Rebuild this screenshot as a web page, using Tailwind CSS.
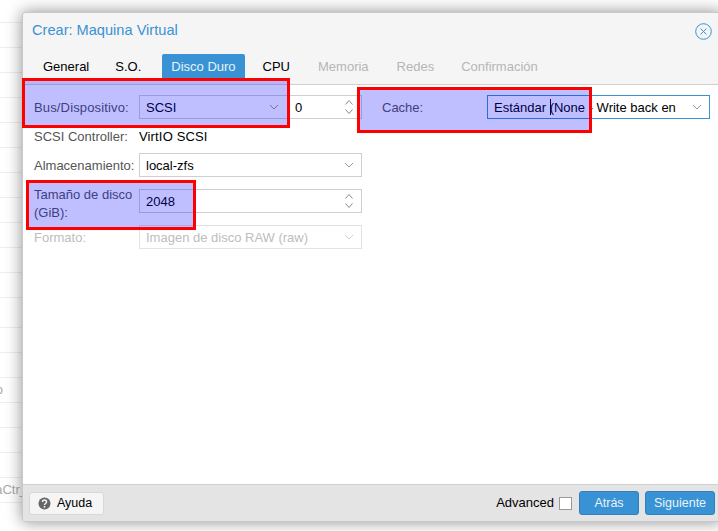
<!DOCTYPE html>
<html lang="en">
<head>
  <meta charset="UTF-8" />
  <title>Crear: Maquina Virtual</title>
  <script src="https://cdn.jsdelivr.net/npm/@tailwindcss/browser@4"></script>
</head>
<body class="relative w-[718px] h-[531px] overflow-hidden bg-white font-['Liberation_Sans',sans-serif] text-[13px] text-black">

  <!-- grid behind the window -->
  <div class="text-[13px] text-[#aaa]">
    <div class="h-[23px] border-b border-[#eee]"></div>
    <div class="h-[25px] border-b border-[#eee]"></div>
    <div class="h-[25px] border-b border-[#eee]"></div>
    <div class="h-[25px] border-b border-[#eee]"></div>
    <div class="h-[25px] border-b border-[#eee]"></div>
    <div class="h-[25px] border-b border-[#eee]"></div>
    <div class="h-[25px] border-b border-[#eee]"></div>
    <div class="h-[25px] border-b border-[#eee]"></div>
    <div class="h-[25px] border-b border-[#eee]"></div>
    <div class="h-[25px] border-b border-[#eee]"></div>
    <div class="h-[25px] border-b border-[#eee]"></div>
    <div class="h-[25px] border-b border-[#eee]"></div>
    <div class="h-[30px] border-b border-[#eee]"></div>
    <div class="h-[25px] border-b border-[#eee]"></div>
    <div class="h-[25px] border-b border-[#eee]"></div>
    <div class="h-[25px] border-b border-[#eee] flex items-center justify-end w-[22px]"><span class="mr-[19px]">o</span></div>
    <div class="h-[25px] border-b border-[#eee]"></div>
    <div class="h-[25px] border-b border-[#eee]"></div>
    <div class="h-[25px] border-b border-[#eee]"></div>
    <div class="h-[25px] border-b border-[#eee] flex items-center justify-end w-[27px] whitespace-nowrap"><span>aCtr_</span></div>
  </div>

  <!-- window, runs past the right edge of the shot -->
  <div class="absolute left-[22px] top-[12px] w-[700px] h-[510px] flex flex-col bg-[#f5f5f5] border border-[#c8c8c8] rounded-[3px] shadow-[0_0_16px_rgba(0,0,0,0.45)]">
    <div class="h-[36px] flex items-center justify-between pl-[9px] pr-[9px] shrink-0">
      <span class="text-[14.6px] text-[#3892d4]">Crear: Maquina Virtual</span>
      <svg width="17" height="17" viewBox="0 0 17 17" fill="none" stroke="#3892d4"><circle cx="8.500" cy="8.500" r="7.800"/><path d="M5.500 5.500l6 6M11.500 5.500l-6 6"/></svg>
    </div>

    <div class="h-[36px] flex items-start gap-[10px] pt-[5px] pl-[11px] border-b border-[#cfcfcf] shrink-0">
      <span class="h-[24px] pt-[2px] px-[9px] flex items-center">General</span>
      <span class="h-[24px] pt-[2px] px-[9px] -ml-[2px] flex items-center">S.O.</span>
      <span class="h-[24px] pt-[2px] px-[9px] ml-[2px] flex items-center rounded-t-[2px] bg-[#3892d4] text-[#e8f3fb]">Disco Duro</span>
      <span class="h-[24px] pt-[2px] px-[9px] -ml-[1px] flex items-center">CPU</span>
      <span class="h-[24px] pt-[2px] px-[9px] flex items-center text-[#b5b5b5]">Memoria</span>
      <span class="h-[24px] pt-[2px] px-[9px] flex items-center text-[#b5b5b5]">Redes</span>
      <span class="h-[24px] pt-[2px] px-[9px] -ml-[1px] flex items-center text-[#b5b5b5]">Confirmación</span>
    </div>

    <div class="flex-1 bg-white pt-[10px] pl-[11px]">
      <div class="flex">
        <div class="w-[328px] flex flex-col">
          <div class="h-[24px] flex items-center">
            <span class="w-[105px] pt-[2px] text-[#555] tracking-[0.15px]">Bus/Dispositivo:</span>
            <div class="w-[149px] h-full flex items-center justify-between pl-[6px] pr-[8px] border border-[#cfcfcf]">
              <span class="pt-[2px]">SCSI</span>
              <svg width="10" height="6" viewBox="0 0 10 6" fill="none" stroke="#999"><path d="M1 1l4 4 4-4"/></svg>
            </div>
            <div class="flex-1 h-full flex items-center justify-between pl-[7px] pr-[8px] border border-l-0 border-[#cfcfcf]">
              <span class="pt-[2px]">0</span>
              <svg width="8" height="16" viewBox="0 0 8 16" fill="none" stroke="#888"><path d="M.5 5.500l3.500-4 3.500 4M.5 10.500l3.500 4 3.500-4"/></svg>
            </div>
          </div>
          <div class="h-[34px] flex items-center">
            <span class="w-[105px] pt-[2px] text-[#555]">SCSI Controller:</span>
            <span class="pt-[2px] tracking-[0.15px]">VirtIO SCSI</span>
          </div>
          <div class="h-[24px] flex items-center">
            <span class="w-[105px] pt-[2px] text-[#555]">Almacenamiento:</span>
            <div class="flex-1 h-full flex items-center justify-between pl-[6px] pr-[7px] border border-[#cfcfcf]">
              <span class="pt-[2px]">local-zfs</span>
              <svg width="10" height="6" viewBox="0 0 10 6" fill="none" stroke="#999"><path d="M1 1l4 4 4-4"/></svg>
            </div>
          </div>
          <div class="mt-[12px] h-[24px] flex items-center">
            <span class="w-[105px] pt-[6px] leading-[18px] text-[#555]">Tamaño de disco (GiB):</span>
            <div class="flex-1 h-[24px] flex items-center justify-between pl-[6px] pr-[8px] border border-[#cfcfcf]">
              <span class="pt-[2px]">2048</span>
              <svg width="8" height="16" viewBox="0 0 8 16" fill="none" stroke="#888"><path d="M.5 5.500l3.500-4 3.500 4M.5 10.500l3.500 4 3.500-4"/></svg>
            </div>
          </div>
          <div class="mt-[12px] h-[24px] flex items-center text-[#bdbdbd]">
            <span class="w-[105px] pt-[2px]">Formato:</span>
            <div class="flex-1 h-full flex items-center justify-between pl-[6px] pr-[7px] border border-[#e3e3e3]">
              <span class="pt-[2px]">Imagen de disco RAW (raw)</span>
              <svg width="10" height="6" viewBox="0 0 10 6" fill="none" stroke="#ccc"><path d="M1 1l4 4 4-4"/></svg>
            </div>
          </div>
        </div>
        <div class="ml-[20px] w-[328px] h-[24px] flex items-center">
          <span class="w-[105px] pt-[2px] text-[#555]">Cache:</span>
          <div class="flex-1 h-full flex items-center justify-between pl-[6px] pr-[7px] border border-[#3892d4]">
            <span class="pt-[2px] whitespace-pre">Estándar <span class="relative"><span class="absolute left-[0px] top-[-1px] w-px h-[16px] bg-black"></span></span>(None - Write back en</span>
            <svg width="10" height="6" viewBox="0 0 10 6" fill="none" stroke="#999"><path d="M1 1l4 4 4-4"/></svg>
          </div>
        </div>
      </div>
    </div>

    <div class="h-[37px] flex items-center justify-between px-[6px] bg-[#e4e4e4] border-t border-[#cfcfcf] shrink-0">
      <div class="h-[23px] w-[75px] flex items-center gap-[6px] pl-[8px] bg-[#f5f5f5] border border-[#d8d8d8] rounded-[3px] text-[12.500px]">
        <svg width="13" height="13" viewBox="0 0 13 13"><circle cx="6.500" cy="6.500" r="6" fill="#666"/><path d="M4.500 5c0-2.600 4-2.600 4 0 0 1.500-2 1.500-2 3" fill="none" stroke="#f5f5f5" stroke-width="1.500"/><rect x="5.700" y="9" width="1.600" height="1.600" fill="#f5f5f5"/></svg>
        <span>Ayuda</span>
      </div>
      <div class="flex items-center">
        <span>Advanced</span>
        <span class="ml-[5px] w-[13px] h-[13px] bg-white border border-[#999]"></span>
        <span class="ml-[7px] w-[60px] h-[24px] flex items-center justify-center rounded-[3px] bg-[#3892d4] border border-[#2f80bd] text-[12.500px] text-[#e8f3fb]">Atrás</span>
        <span class="ml-[6px] w-[70px] h-[24px] flex items-center justify-center rounded-[3px] bg-[#3892d4] border border-[#2f80bd] text-[12.500px] text-[#e8f3fb]">Siguiente</span>
      </div>
    </div>
  </div>

  <!-- annotations drawn over the screenshot -->
  <div class="absolute left-[22px] top-[78px] w-[268px] h-[50px] bg-[#0000ff]/25 border-[3px] border-[#f00]"></div>
  <div class="absolute left-[357px] top-[87px] w-[235px] h-[46px] bg-[#0000ff]/25 border-[3px] border-[#f00]"></div>
  <div class="absolute left-[26px] top-[180px] w-[170px] h-[50px] bg-[#0000ff]/25 border-[3px] border-[#f00]"></div>
</body>
</html>
